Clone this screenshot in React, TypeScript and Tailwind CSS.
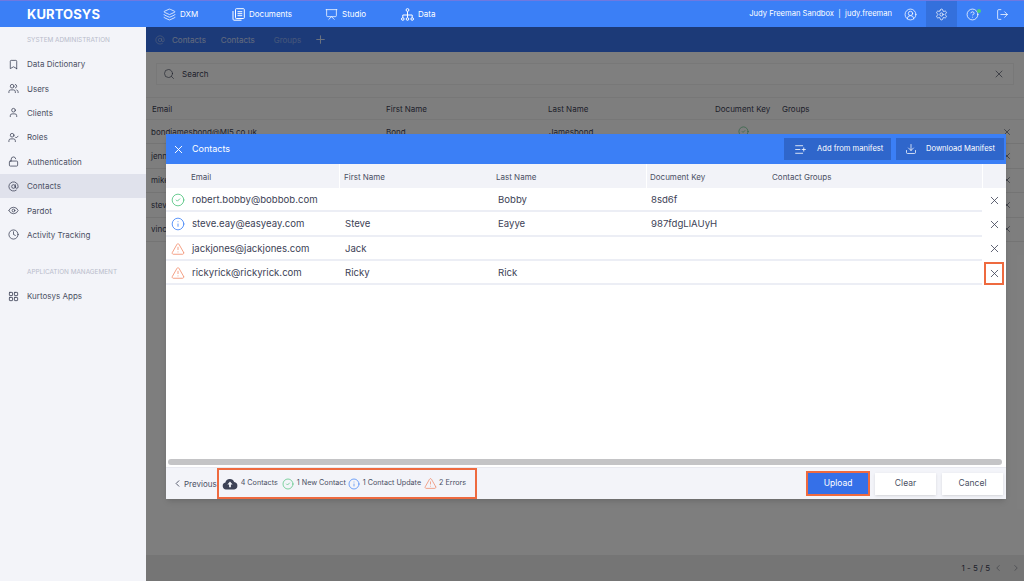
import {
  AtSign, Bookmark, ChevronLeft, ChevronRight, CircleCheck, CircleUserRound, Clock, Download, Eye, Info,
  Layers, LayoutGrid, ListPlus, LockOpen, LogOut, Plus, Presentation, Search, Settings, CircleHelp,
  TriangleAlert, User, UserCheck, Users, X,
} from "lucide-react";

function DocsIcon({ size = 13 }: { size?: number; strokeWidth?: number }) {
  return (
    <svg width={size} height={size} viewBox="0 0 13 13" fill="none" stroke="currentColor" strokeWidth="1">
      <rect x="3.5" y="0.7" width="8.8" height="9.8" rx="0.8" />
      <path d="M1 3v8.2c0 .6.4 1 1 1h7.5M5.5 3.7h4.8M5.5 5.7h4.8M5.5 7.7h4.8" />
    </svg>
  );
}

function DataIcon({ size = 13 }: { size?: number; strokeWidth?: number }) {
  return (
    <svg width={size} height={size} viewBox="0 0 13 13" fill="none" stroke="currentColor" strokeWidth="1">
      <circle cx="6.5" cy="2" r="1.4" />
      <circle cx="1.8" cy="11" r="1.3" />
      <circle cx="6.5" cy="11" r="1.3" />
      <circle cx="11.2" cy="11" r="1.3" />
      <path d="M6.5 3.4v6.3M1.8 9.7V7h9.4v2.7" />
    </svg>
  );
}

const topNav = [
  { label: "DXM", icon: Layers, cls: "w-[69px]" },
  { label: "Documents", icon: DocsIcon, cls: "w-[93px]" },
  { label: "Studio", icon: Presentation, cls: "w-[76px]" },
  { label: "Data", icon: DataIcon, cls: "w-[60px]" },
];

const sideItems = [
  { label: "Data Dictionary", icon: Bookmark },
  { label: "Users", icon: Users },
  { label: "Clients", icon: User },
  { label: "Roles", icon: UserCheck },
  { label: "Authentication", icon: LockOpen },
  { label: "Contacts", icon: AtSign, active: true },
  { label: "Pardot", icon: Eye },
  { label: "Activity Tracking", icon: Clock },
];

const behindRows = ["bondjamesbond@MI5.co.uk", "jennifer@jennifer.com", "mike@mike.com", "steve@steve.com", "vince@vince.com"];

const uploadRows = [
  { status: "new", email: "robert.bobby@bobbob.com", first: "", last: "Bobby", key: "8sd6f" },
  { status: "update", email: "steve.eay@easyeay.com", first: "Steve", last: "Eayye", key: "987fdgLlAUyH" },
  { status: "error", email: "jackjones@jackjones.com", first: "Jack", last: "", key: "" },
  { status: "error", email: "rickyrick@rickyrick.com", first: "Ricky", last: "Rick", key: "" },
];

const cols = "grid grid-cols-[174px_153px_153px_122px_214px_24px]";

function StatusIcon({ status, size = 14 }: { status: string; size?: number }) {
  if (status === "new") return <CircleCheck size={size} strokeWidth={1.4} className="text-[#4cc27a]" />;
  if (status === "update") return <Info size={size} strokeWidth={1.4} className="text-[#3b7ff6]" />;
  return <TriangleAlert size={size} strokeWidth={1.3} className="text-[#f0835f]" />;
}

function TopBar() {
  return (
    <header className="flex h-[27px] shrink-0 items-center border-t border-[#6f78e0] bg-[#3b7ff6] text-[8px] text-white">
      <div className="w-[163px] pl-[27px] text-[13px] font-bold leading-none tracking-[0.1px]">KURTOSYS</div>
      {topNav.map((n) => (
        <div key={n.label} className={`flex items-center gap-[4px] ${n.cls}`}>
          <n.icon size={13} strokeWidth={1.4} />
          <span>{n.label}</span>
        </div>
      ))}
      <div className="ml-auto pr-[3px] text-[7.6px]">Judy Freeman Sandbox&nbsp; |&nbsp; judy.freeman</div>
      <div className="flex h-full items-center pr-[6px]">
        <div className="flex h-full w-[31px] items-center justify-center">
          <CircleUserRound size={13} strokeWidth={1.4} />
        </div>
        <div className="flex h-full w-[31px] items-center justify-center bg-[#3470dc]">
          <Settings size={13} strokeWidth={1.4} />
        </div>
        <div className="relative flex h-full w-[30px] items-center justify-center">
          <CircleHelp size={13} strokeWidth={1.4} />
          <span className="absolute right-[6px] top-[8px] h-[4px] w-[4px] rounded-full bg-[#4cd07a]" />
        </div>
        <div className="flex h-full w-[31px] items-center justify-center">
          <LogOut size={13} strokeWidth={1.4} />
        </div>
      </div>
    </header>
  );
}

function Sidebar() {
  return (
    <aside className="flex w-[146px] shrink-0 flex-col bg-[#f3f4f9] text-[8px] text-[#4a4f63]">
      <div className="pb-[7px] pl-[27px] pt-[8px] text-[6.4px] leading-[10px] text-[#b9bccb]">SYSTEM ADMINISTRATION</div>
      {sideItems.map((s) => (
        <div key={s.label} className={`flex h-[24.4px] items-center gap-[8px] pl-[8px] ${s.active ? "bg-[#e0e2ec]" : ""}`}>
          <s.icon size={11} strokeWidth={1.7} className="text-[#3d4256]" />
          <span>{s.label}</span>
        </div>
      ))}
      <div className="pb-[7px] pl-[27px] pt-[20px] text-[6.4px] leading-[10px] text-[#b9bccb]">APPLICATION MANAGEMENT</div>
      <div className="flex h-[24px] items-center gap-[8px] pl-[8px]">
        <LayoutGrid size={11} strokeWidth={1.8} className="text-[#3d4256]" />
        <span>Kurtosys Apps</span>
      </div>
    </aside>
  );
}

function PageBehind() {
  return (
    <div className="flex h-full flex-col bg-[#fdfdfd] text-[8px] text-[#3d4256]">
      <div className="flex h-[25px] shrink-0 items-center bg-[#3874f0] pl-[9px] text-white">
        <AtSign size={10} strokeWidth={1.4} className="opacity-60" />
        <span className="ml-[7px] opacity-70">Contacts</span>
        <span className="ml-[15px] opacity-70">Contacts</span>
        <span className="ml-[19px] opacity-40">Groups</span>
        <Plus size={13} className="ml-[13px] opacity-80" />
      </div>
      <div className="mx-[10px] mt-[11px] flex h-[22px] items-center border border-[#f0f0f0] bg-white px-[6px]">
        <Search size={12} strokeWidth={1.3} />
        <span className="ml-[7px]">Search</span>
        <X size={12} strokeWidth={1.3} className="ml-auto mr-[2px]" />
      </div>
      <div className="mt-[12px] grid h-[23px] grid-cols-[234px_162px_167px_67px_1fr] items-center border-y border-[#eeeeee] pl-[6px] pt-[1px]">
        <span>Email</span>
        <span>First Name</span>
        <span>Last Name</span>
        <span>Document Key</span>
        <span>Groups</span>
      </div>
      {behindRows.map((r, i) => (
        <div key={r} className="grid h-[24.4px] shrink-0 grid-cols-[235px_163px_189px_1fr_auto] items-center border-b border-[#e8e8e8] pl-[5px] pr-[12px]">
          <span>{r}</span>
          <span>{i === 0 && "Bond"}</span>
          <span>{i === 0 && "Jamesbond"}</span>
          <span>{i === 0 && <CircleCheck size={11} strokeWidth={1.4} className="text-[#4cc27a]" />}</span>
          <X size={10} strokeWidth={1.5} />
        </div>
      ))}
      <div className="mt-auto flex h-[26px] items-center justify-end bg-[#ebebeb] pr-[3px]">
        <span>1 - 5 / 5</span>
        <ChevronLeft size={10} className="ml-[3px] opacity-50" />
        <ChevronRight size={10} className="ml-[8px] opacity-50" />
      </div>
    </div>
  );
}

function UploadModal() {
  return (
    <div className="absolute left-[20px] top-[107px] flex h-[365px] w-[840px] flex-col bg-white text-[#3d4256] shadow-md">
      <div className="flex h-[30px] shrink-0 items-center bg-[#3b7ff6] pl-[6px] pr-[2px] text-[7.6px] text-white">
        <X size={13} strokeWidth={1.8} />
        <span className="ml-[7px] text-[9px]">Contacts</span>
        <button className="ml-auto flex h-[22px] w-[107px] items-center bg-[#2f66cb] pl-[10px]">
          <ListPlus size={13} strokeWidth={1.5} />
          <span className="ml-[10px]">Add from manifest</span>
        </button>
        <button className="ml-[5px] flex h-[22px] w-[108px] items-center bg-[#2f66cb] pl-[9px]">
          <Download size={12} strokeWidth={1.5} />
          <span className="ml-[9px]">Download Manifest</span>
        </button>
      </div>

      <div className={`${cols} h-[24px] shrink-0 items-center bg-[#f2f3f8] text-[8px] leading-[26px] text-[#4a4f63]`}>
        <span className="h-full border-r border-white pl-[25px]">Email</span>
        <span className="pl-[4px]">First Name</span>
        <span className="pl-[3px]">Last Name</span>
        <span className="h-full border-l border-white pl-[3px]">Document Key</span>
        <span className="pl-[4px]">Contact Groups</span>
        <span className="h-full border-l border-white" />
      </div>

      <div className="flex-1">
        {uploadRows.map((r, i) => (
          <div key={r.email} className={`${cols} h-[24.3px] items-center text-[9.6px]`}>
            <span className="flex h-full items-center border-b-2 border-[#eceef5] pl-[5px] pt-[2px]">
              <StatusIcon status={r.status} />
              <span className="ml-[7px]">{r.email}</span>
            </span>
            <span className="flex h-full items-center border-b-2 border-[#eceef5] pl-[5px] pt-[2px]">{r.first}</span>
            <span className="flex h-full items-center border-b-2 border-[#eceef5] pl-[5px] pt-[2px]">{r.last}</span>
            <span className="flex h-full items-center border-b-2 border-[#eceef5] pl-[5px] pt-[2px]">{r.key}</span>
            <span className="h-full border-b-2 border-[#eceef5]" />
            <span className="flex h-full items-center justify-center">
              <span className={`flex h-[23px] w-[20px] items-center justify-center ${i === 3 ? "border-2 border-[#ee6a3f]" : ""}`}>
                <X size={13} strokeWidth={1.5} />
              </span>
            </span>
          </div>
        ))}
      </div>

      <div className="mb-[2px] ml-[2px] mr-[4px] h-[6px] shrink-0 rounded-full bg-[#c4c4c6]" />
      <div className="flex h-[32px] shrink-0 items-center border-t border-[#e8e9f0] bg-[#f3f4f9] text-[8px] text-[#4a4f63]">
        <ChevronLeft size={11} strokeWidth={2} className="ml-[6px]" />
        <span className="ml-[1px]">Previous</span>
        <div className="flex h-[31px] w-[260px] items-center border-2 border-[#ee6a3f] pl-[3px] text-[7.2px]">
          <svg width="16" height="12" viewBox="0 0 16 12" className="shrink-0 text-[#3d4256]">
            <path fill="currentColor" d="M4 11.5a3.5 3.5 0 0 1-.6-6.9A4.6 4.6 0 0 1 12.2 4a3.8 3.8 0 0 1 0 7.5Z" />
            <path fill="#f3f4f9" d="M8 3.4 5.4 6.6h1.7v2.7h1.8V6.6h1.7Z" />
          </svg>
          <span className="ml-[3px]">4 Contacts</span>
          <span className="ml-[4px]"><StatusIcon status="new" size={12} /></span>
          <span className="ml-[3px]">1 New Contact</span>
          <span className="ml-[2px]"><StatusIcon status="update" size={12} /></span>
          <span className="ml-[3px]">1 Contact Update</span>
          <span className="ml-[3px]"><StatusIcon status="error" size={13} /></span>
          <span className="ml-[2px]">2 Errors</span>
        </div>
        <button className="ml-auto flex h-[25px] w-[64px] items-center justify-center border-2 border-[#ee6a3f] bg-[#3570e8] text-[8.5px] text-white">Upload</button>
        <button className="ml-[5px] h-[22px] w-[61px] bg-white text-[8.5px] shadow-sm">Clear</button>
        <button className="ml-[6px] mr-[3px] h-[22px] w-[61px] bg-white text-[8.5px] shadow-sm">Cancel</button>
      </div>
    </div>
  );
}

export default function App() {
  return (
    <div className="flex h-[581px] w-[1024px] flex-col overflow-hidden whitespace-nowrap font-['Inter',sans-serif]">
      <TopBar />
      <div className="flex min-h-0 flex-1">
        <Sidebar />
        <main className="relative flex-1">
          <PageBehind />
          <div className="absolute inset-0 bg-black/50" />
          <UploadModal />
        </main>
      </div>
    </div>
  );
}
